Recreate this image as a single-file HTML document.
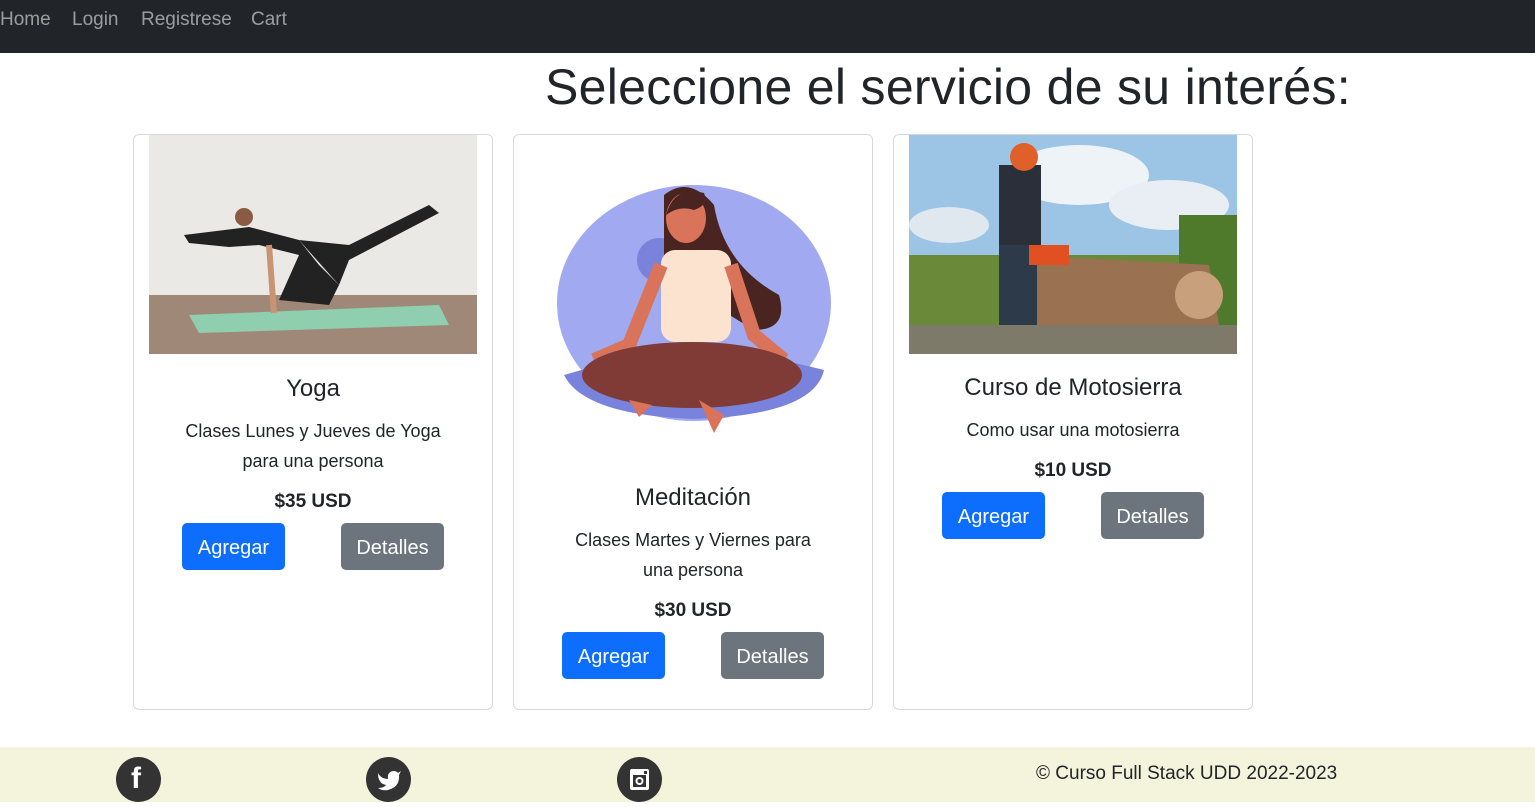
<!DOCTYPE html>
<html><head><meta charset="utf-8"><style>
*{margin:0;padding:0;box-sizing:border-box}
body{width:1535px;height:802px;overflow:hidden;background:#fff;font-family:"Liberation Sans",sans-serif;color:#212529;position:relative}
.nav{position:absolute;left:0;top:0;width:1535px;height:53px;background:#212529}
.nav span{position:absolute;top:9px;font-size:19px;color:rgba(255,255,255,.55)}
h1{position:absolute;left:0;width:1896px;text-align:center;top:58px;font-size:50px;font-weight:normal;color:#212529;letter-spacing:0.3px}
.card{position:absolute;top:134px;width:360px;height:576px;border:1px solid #d8d8d8;border-radius:6px;background:#fff;overflow:hidden}
.t{position:absolute;left:0;width:358px;text-align:center}
.title{font-size:24px;font-weight:500}
.desc{font-size:18px;line-height:30px;padding:0 40px;color:#212529}
.price{font-size:19px;font-weight:bold}
.btn{position:absolute;height:47px;width:103px;border-radius:5px;color:#fff;font-size:20px;text-align:center;line-height:50px}
.b1{background:#0d6efd}.b2{background:#6c757d}
.foot{position:absolute;left:0;top:747px;width:1535px;height:55px;background:#f4f4dc}
.ic{position:absolute;top:757px;width:45px;height:45px;border-radius:50%;background:#333}
</style></head><body>
<div class="nav"><span style="left:0">Home</span><span style="left:72px">Login</span><span style="left:141px">Registrese</span><span style="left:251px">Cart</span></div>
<h1>Seleccione el servicio de su interés:</h1>

<div class="card" style="left:133px">
<svg style="position:absolute;left:15px;top:0" width="328" height="219">
<rect width="328" height="219" fill="#e4e2de"/><rect y="0" width="328" height="160" fill="#ebe9e6"/>
<rect y="160" width="328" height="59" fill="#a08878"/>
<polygon points="40,180 290,170 300,190 50,198" fill="#8fcfb0"/>
<path d="M35,100 L100,92 L150,105 L170,130 L190,150 L180,170 L130,165 L150,120 L110,110 L80,112 L40,108Z" fill="#222"/>
<path d="M150,105 L200,110 L280,70 L290,78 L200,125 L190,150Z" fill="#222"/>
<circle cx="95" cy="82" r="9" fill="#8a5a44"/>
<line x1="120" y1="110" x2="125" y2="178" stroke="#c89474" stroke-width="6"/>
</svg>
<div class="t title" style="top:240px">Yoga</div>
<div class="t desc" style="top:281px">Clases Lunes y Jueves de Yoga para una persona</div>
<div class="t price" style="top:356px">$35 USD</div>
<div class="btn b1" style="left:48px;top:388px">Agregar</div>
<div class="btn b2" style="left:207px;top:388px">Detalles</div>
</div>

<div class="card" style="left:513px">
<svg style="position:absolute;left:0;top:0" width="360" height="330">
<ellipse cx="180" cy="168" rx="137" ry="118" fill="#a1aaf0"/>
<path d="M50,240 Q180,200 310,235 Q300,280 180,284 Q70,280 50,240Z" fill="#7983dc"/>
<circle cx="145" cy="125" r="22" fill="#7983dc"/>
<path d="M150,60 Q175,40 200,70 Q210,130 265,160 Q275,195 240,195 L150,140Z" fill="#4a2420"/>
<rect x="147" y="115" width="70" height="92" rx="14" fill="#fbe3d0"/>
<ellipse cx="172" cy="83" rx="20" ry="25" fill="#d9735a"/>
<path d="M152,80 Q160,50 190,58 Q195,70 180,75 Q165,70 152,80Z" fill="#4a2420"/>
<path d="M147,130 L115,210 L80,225 M217,130 L240,200 L270,225" stroke="#d9735a" stroke-width="14" fill="none"/>
<ellipse cx="178" cy="240" rx="110" ry="33" fill="#813b36"/>
<path d="M115,265 L125,282 L138,270Z M185,265 L200,298 L210,280Z" fill="#d9735a"/>
</svg>
<div class="t title" style="top:349px">Meditación</div>
<div class="t desc" style="top:390px;padding:0 52px">Clases Martes y Viernes para una persona</div>
<div class="t price" style="top:465px">$30 USD</div>
<div class="btn b1" style="left:48px;top:497px">Agregar</div>
<div class="btn b2" style="left:207px;top:497px">Detalles</div>
</div>

<div class="card" style="left:893px">
<svg style="position:absolute;left:15px;top:0" width="328" height="219">
<rect width="328" height="219" fill="#9cc4e4"/>
<ellipse cx="170" cy="40" rx="70" ry="30" fill="#eef3f7"/><ellipse cx="260" cy="70" rx="60" ry="25" fill="#e8eef3"/><ellipse cx="40" cy="90" rx="40" ry="18" fill="#dfe8ef"/>
<rect y="120" width="328" height="99" fill="#6a8a3a"/>
<rect x="270" y="80" width="58" height="110" fill="#4f7a2c"/>
<path d="M110,120 L300,130 L310,190 L120,195Z" fill="#9a7252"/>
<circle cx="290" cy="160" r="24" fill="#c8a07c"/>
<rect x="90" y="30" width="42" height="90" fill="#2b2f3a"/>
<rect x="90" y="110" width="38" height="80" fill="#2c3a4a"/>
<circle cx="115" cy="22" r="14" fill="#e0602a"/>
<rect x="120" y="110" width="40" height="20" fill="#e05020"/>
<rect y="190" width="328" height="29" fill="#7d7a6a"/>
</svg>
<div class="t title" style="top:239px">Curso de Motosierra</div>
<div class="t desc" style="top:280px">Como usar una motosierra</div>
<div class="t price" style="top:325px">$10 USD</div>
<div class="btn b1" style="left:48px;top:357px">Agregar</div>
<div class="btn b2" style="left:207px;top:357px">Detalles</div>
</div>

<div class="foot"></div>
<div class="ic" style="left:116px;width:45px"><span style="position:absolute;left:15px;top:5px;color:#fff;font-size:30px;font-weight:bold">f</span></div>
<div class="ic" style="left:366px"><svg width="45" height="45"><path d="M12,16 Q15,22 22,22 Q21,15 27,14 Q31,14 32,16 L35,14 L33,18 Q34,30 22,33 Q16,34 12,31 Q18,31 20,28 Q15,27 14,24 Q12,22 12,16Z" fill="#fff"/></svg></div>
<div class="ic" style="left:617px"><svg width="45" height="45"><rect x="13" y="12" width="19" height="21" rx="2" fill="#fff"/><rect x="16" y="18" width="13" height="12" fill="#333"/><circle cx="22.5" cy="24" r="4" fill="#fff"/><circle cx="22.5" cy="24" r="2" fill="#333"/><rect x="27" y="14" width="3" height="3" fill="#333"/></svg></div>
<div style="position:absolute;left:1036px;top:763px;font-size:19px;color:#212529">© Curso Full Stack UDD 2022-2023</div>
</body></html>
